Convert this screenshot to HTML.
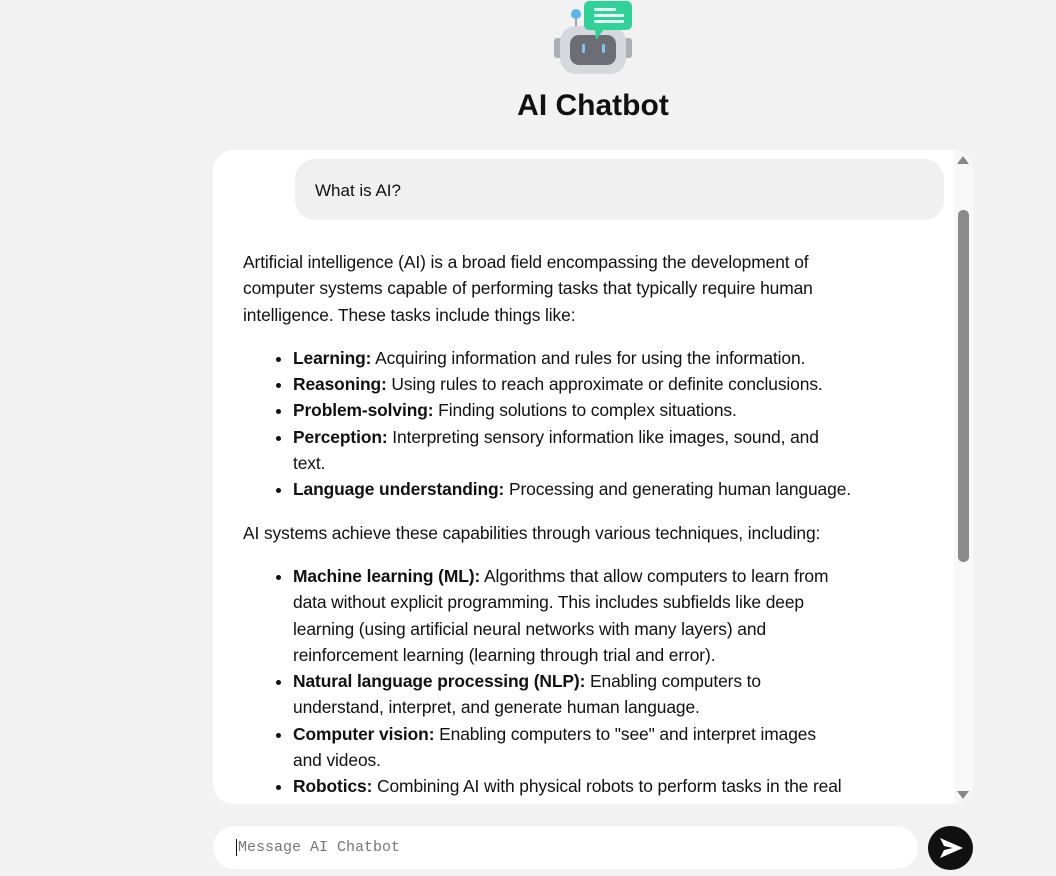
<!DOCTYPE html>
<html><head><meta charset="utf-8"><style>
body{margin:0;width:1056px;height:876px;background:#f2f2f2;font-family:"Liberation Sans",sans-serif;color:#111;overflow:hidden;position:relative}
.title{position:absolute;left:0;width:1186px;text-align:center;top:89px;font-size:30px;font-weight:bold;margin:0}
.box{position:absolute;left:213px;top:150px;width:760px;height:654px;background:#fff;border-radius:20px;overflow:hidden}
.user{position:absolute;left:82px;top:9px;width:649px;height:61px;background:#f0f0f0;border-radius:20px;font-size:17px;line-height:63px;padding-left:20px;box-sizing:border-box}
.bot{position:absolute;left:30px;top:99px;font-size:17.4px;line-height:26.3px;white-space:nowrap;letter-spacing:-0.1px}
.bot p{margin:0 0 17px}
.bot ul{margin:0 0 17px;padding-left:50px}
.sb{position:absolute;left:741px;top:0;width:19px;height:654px;background:#f8f8f8}
.thumb{position:absolute;left:4px;top:60px;width:11px;height:352px;background:#8a8a8a;border-radius:5px}
.up{position:absolute;left:3px;top:6px;width:0;height:0;border-left:6px solid transparent;border-right:6px solid transparent;border-bottom:8px solid #888}
.dn{position:absolute;left:3px;bottom:5px;width:0;height:0;border-left:6px solid transparent;border-right:6px solid transparent;border-top:8px solid #888}
.inp{position:absolute;left:213px;top:826px;width:705px;height:43px;background:#fff;border-radius:22px;font-family:"Liberation Mono",monospace;font-size:15px;color:#777;line-height:43px;padding-left:23px;box-sizing:border-box}
.send{position:absolute;left:928px;top:826px;width:45px;height:44px;border-radius:50%;background:#111}
</style></head><body>
<svg style="position:absolute;left:552px;top:0" width="82" height="78" viewBox="0 0 82 78">
<line x1="24" y1="14" x2="24" y2="30" stroke="#9aa3ab" stroke-width="2"/>
<circle cx="24" cy="14" r="5" fill="#5ab4f0"/>
<rect x="2" y="38" width="8" height="20" rx="3" fill="#aab0b5"/>
<rect x="72" y="38" width="8" height="20" rx="3" fill="#aab0b5"/>
<rect x="8" y="26" width="66" height="48" rx="16" fill="#d5d8dc"/>
<rect x="18" y="35" width="46" height="30" rx="9" fill="#6d6e75"/>
<rect x="30" y="44" width="3" height="9" rx="1.5" fill="#7fc8f5"/>
<rect x="50" y="44" width="3" height="9" rx="1.5" fill="#7fc8f5"/>
<rect x="32" y="1" width="48" height="29" rx="5" fill="#2fd39a"/>
<polygon points="43,29 52,29 44,40" fill="#2fd39a"/>
<rect x="42" y="8" width="22" height="3" rx="1.5" fill="#e8fff6"/>
<rect x="42" y="14" width="30" height="3" rx="1.5" fill="#e8fff6"/>
<rect x="42" y="20" width="30" height="3" rx="1.5" fill="#e8fff6"/>
</svg>
<h1 class="title">AI Chatbot</h1>
<div class="box">
<div class="user">What is AI?</div>
<div class="bot">
<p>Artificial intelligence (AI) is a broad field encompassing the development of<br>computer systems capable of performing tasks that typically require human<br>intelligence. These tasks include things like:</p>
<ul>
<li><b>Learning:</b> Acquiring information and rules for using the information.</li>
<li><b>Reasoning:</b> Using rules to reach approximate or definite conclusions.</li>
<li><b>Problem-solving:</b> Finding solutions to complex situations.</li>
<li><b>Perception:</b> Interpreting sensory information like images, sound, and<br>text.</li>
<li><b>Language understanding:</b> Processing and generating human language.</li>
</ul>
<p>AI systems achieve these capabilities through various techniques, including:</p>
<ul>
<li><b>Machine learning (ML):</b> Algorithms that allow computers to learn from<br>data without explicit programming. This includes subfields like deep<br>learning (using artificial neural networks with many layers) and<br>reinforcement learning (learning through trial and error).</li>
<li><b>Natural language processing (NLP):</b> Enabling computers to<br>understand, interpret, and generate human language.</li>
<li><b>Computer vision:</b> Enabling computers to "see" and interpret images<br>and videos.</li>
<li><b>Robotics:</b> Combining AI with physical robots to perform tasks in the real<br>world.</li>
</ul>
</div>
<div class="sb"><div class="up"></div><div class="thumb"></div><div class="dn"></div></div>
</div>
<div class="inp"><span style="border-left:1px solid #111;margin-right:1px"></span>Message AI Chatbot</div>
<div class="send"><svg width="45" height="44" viewBox="0 0 45 44"><path d="M12 12 L35 22 L12 32 L16 24 L25 22 L16 20 Z" fill="#fff"/></svg></div>
</body></html>
